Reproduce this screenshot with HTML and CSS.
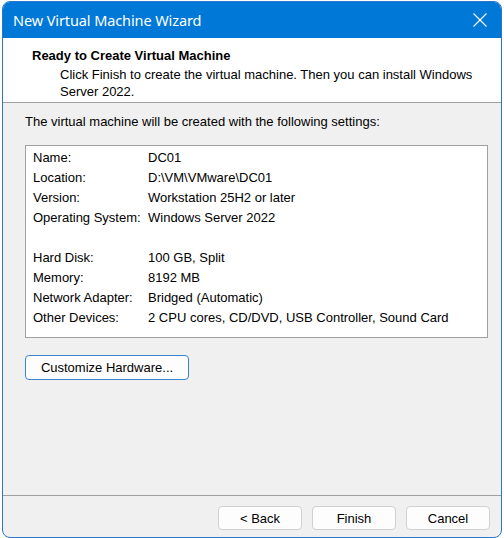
FILE: index.html
```html
<!DOCTYPE html>
<html>
<head>
<meta charset="utf-8">
<link rel="stylesheet" href="styles.css">
</head>
<body>
<div class="window">
  <div class="titlebar">
    <span class="title">New Virtual Machine Wizard</span>
    <svg class="close" width="14" height="14" viewBox="0 0 14 14"><path d="M0.5 0.5 L13.5 13.5 M13.5 0.5 L0.5 13.5" stroke="#ffffff" stroke-width="1.1" fill="none"/></svg>
  </div>
  <div class="header">
    <div class="heading">Ready to Create Virtual Machine</div>
    <div class="subtitle">Click Finish to create the virtual machine. Then you can install Windows Server 2022.</div>
  </div>
  <div class="content">
    <div class="intro">The virtual machine will be created with the following settings:</div>
    <div class="settings">
      <div class="row"><span class="label">Name:</span><span>DC01</span></div>
      <div class="row"><span class="label">Location:</span><span>D:\VM\VMware\DC01</span></div>
      <div class="row"><span class="label">Version:</span><span>Workstation 25H2 or later</span></div>
      <div class="row"><span class="label">Operating System:</span><span>Windows Server 2022</span></div>
      <div class="row"><span class="label"></span><span></span></div>
      <div class="row"><span class="label">Hard Disk:</span><span>100 GB, Split</span></div>
      <div class="row"><span class="label">Memory:</span><span>8192 MB</span></div>
      <div class="row"><span class="label">Network Adapter:</span><span>Bridged (Automatic)</span></div>
      <div class="row"><span class="label">Other Devices:</span><span>2 CPU cores, CD/DVD, USB Controller, Sound Card</span></div>
    </div>
    <button class="btn customize">Customize Hardware...</button>
  </div>
  <div class="footer">
    <button class="btn nav">&lt; Back</button>
    <button class="btn nav">Finish</button>
    <button class="btn nav">Cancel</button>
  </div>
</div>
</body>
</html>
```
FILE: styles.css
```css
html, body {
  margin: 0;
  padding: 0;
  background: #ffffff;
}
body {
  width: 504px;
  height: 538px;
  overflow: hidden;
}
.window {
  box-sizing: border-box;
  margin: 1px 2px 0 2px;
  width: 500px;
  height: 537px;
  border: 1px solid #2a77c9;
  border-radius: 8px;
  background: #f0f0f0;
  display: flex;
  flex-direction: column;
  overflow: hidden;
  font-family: "Liberation Sans", Arial, sans-serif;
  font-size: 13px;
  color: #000000;
}
.titlebar {
  height: 36px;
  background: #0078d7;
  display: flex;
  align-items: center;
  justify-content: space-between;
  padding: 0 14px 0 10px;
  flex-shrink: 0;
}
.title {
  color: #ffffff;
  font-family: "Noto Sans", "Open Sans", sans-serif;
  font-size: 14.5px;
  letter-spacing: -0.1px;
  padding-bottom: 1px;
}
.close {
  display: block;
}
.header {
  background: #ffffff;
  height: 64px;
  border-bottom: 1px solid #a0a0a0;
  box-sizing: content-box;
  padding: 0 0 0 29px;
  flex-shrink: 0;
}
.heading {
  font-weight: bold;
  margin-top: 9px;
  line-height: 17px;
}
.subtitle {
  margin: 2px 20px 0 28px;
  line-height: 17px;
}
.content {
  flex: 1;
  padding: 10px 0 0 22px;
}
.intro {
  line-height: 17px;
}
.settings {
  margin-top: 15px;
  width: 463px;
  height: 193px;
  background: #ffffff;
  border: 1px solid #a0a0a0;
  padding: 2px 0 0 7px;
  box-sizing: border-box;
}
.row {
  display: flex;
  height: 20px;
  line-height: 20px;
}
.label {
  width: 115px;
  flex-shrink: 0;
}
.btn {
  font-family: "Liberation Sans", Arial, sans-serif;
  font-size: 13px;
  color: #000000;
  background: #fdfdfd;
  border: 1px solid #d0d0d0;
  border-radius: 4px;
  padding: 0;
  margin: 0;
}
.customize {
  display: block;
  margin-top: 17px;
  width: 164px;
  height: 25px;
  border-color: #3b84cf;
}
.footer {
  height: 42px;
  border-top: 1px solid #a0a0a0;
  display: flex;
  justify-content: flex-end;
  align-items: flex-start;
  gap: 10px;
  padding: 10px 11px 0 0;
  box-sizing: border-box;
  flex-shrink: 0;
}
.nav {
  width: 84px;
  height: 24px;
}
```
